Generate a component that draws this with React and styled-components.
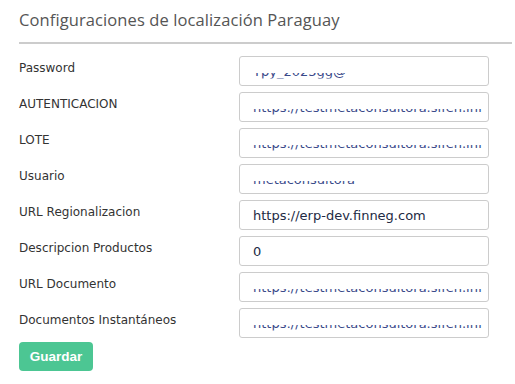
import React from "react"
import styled, { createGlobalStyle } from "styled-components"

const GlobalStyle = createGlobalStyle`
  body {
    margin: 0;
    background: #ffffff;
  }
`

const fields = [
  { label: "Password", value: "Tpy_2023gg@", masked: true },
  { label: "AUTENTICACION", value: "https://testmetaconsultora.sifen.inf", masked: true },
  { label: "LOTE", value: "https://testmetaconsultora.sifen.inf", masked: true },
  { label: "Usuario", value: "metaconsultora", masked: true },
  { label: "URL Regionalizacion", value: "https://erp-dev.finneg.com" },
  { label: "Descripcion Productos", value: "0" },
  { label: "URL Documento", value: "https://testmetaconsultora.sifen.inf", masked: true },
  { label: "Documentos Instantáneos", value: "https://testmetaconsultora.sifen.inf", masked: true },
]

function App() {
  return (
    <Wrapper>
      <GlobalStyle />
      <Header>
        <Title>Configuraciones de localización Paraguay</Title>
      </Header>
      <Form>
        {fields.map((f) => (
          <Row key={f.label}>
            <Label>{f.label}</Label>
            <Field>
              <Value $masked={f.masked}>{f.value}</Value>
            </Field>
          </Row>
        ))}
      </Form>
      <SaveButton>Guardar</SaveButton>
    </Wrapper>
  )
}

export default App

const Wrapper = styled.div`
  width: 515px;
  height: 384px;
  padding-left: 19px;
  box-sizing: border-box;
  overflow: hidden;
`
const Header = styled.div`
  height: 42px;
  border-bottom: 2px solid #cccccc;
  box-sizing: content-box;
  display: flex;
  align-items: center;
  margin-right: 3px;
`
const Title = styled.h2`
  margin: 0;
  padding-bottom: 4px;
  font-family: "Open Sans", sans-serif;
  font-size: 16.5px;
  font-weight: 400;
  color: #555555;
  letter-spacing: 0.1px;
`
const Form = styled.div`
  display: grid;
  grid-template-columns: 220px 250px;
  row-gap: 6px;
  margin-top: 12px;
`
const Row = styled.div`
  display: contents;
`
const Label = styled.div`
  height: 30px;
  display: flex;
  align-items: center;
  padding-bottom: 6px;
  box-sizing: border-box;
  font-family: "DejaVu Sans", Verdana, sans-serif;
  font-size: 12px;
  color: #333333;
`
const Field = styled.div`
  height: 30px;
  box-sizing: border-box;
  border: 1px solid #cccccc;
  border-radius: 3px;
  padding: 0 13px;
  display: flex;
  align-items: center;
  overflow: hidden;
`
const Value = styled.span`
  font-family: "DejaVu Sans", Verdana, sans-serif;
  font-size: 13px;
  color: ${(p) => (p.$masked ? "#3a4a8a" : "#222a44")};
  white-space: nowrap;
  clip-path: ${(p) => (p.$masked ? "inset(64% 0 0 0)" : "none")};
`
const SaveButton = styled.button`
  margin-top: 4px;
  width: 74px;
  height: 29px;
  border: none;
  border-radius: 4px;
  background: #4cc693;
  color: #ffffff;
  font-family: "Liberation Sans", Arial, sans-serif;
  font-weight: 700;
  font-size: 13.5px;
  cursor: pointer;
`
